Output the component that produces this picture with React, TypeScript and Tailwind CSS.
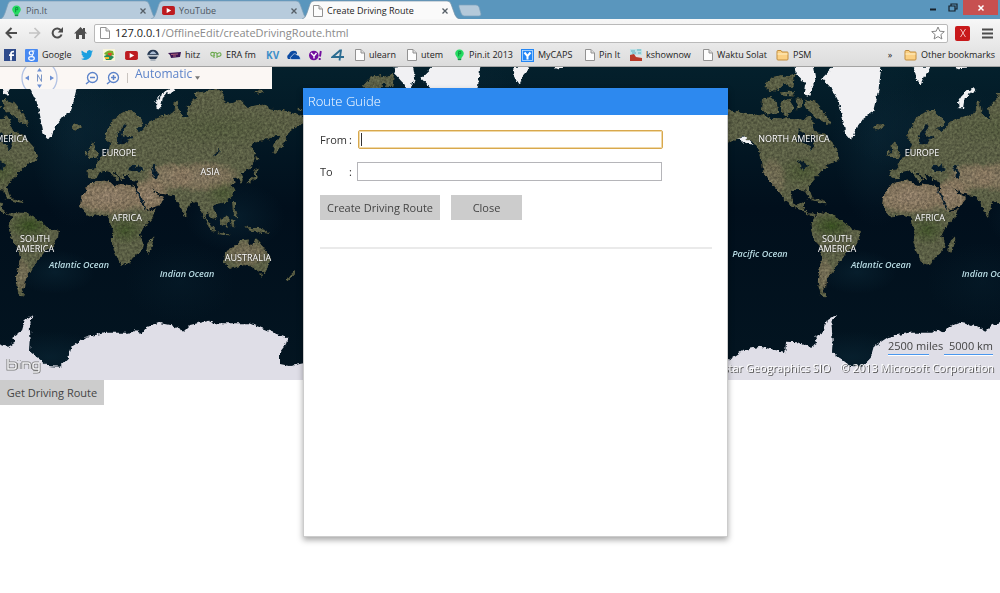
import React from "react";

const font = "font-['Open_Sans','Noto_Sans',sans-serif]";

type Box = { className?: string };

const Page = ({ className = "" }: Box) => (
  <svg viewBox="0 0 10 12" className={`h-3 w-[10px] shrink-0 ${className}`} aria-hidden="true">
    <path d="M.5 .5H6L9.500 4V11.500H.5Z" fill="#fdfdfd" stroke="#929292" />
    <path d="M6 .5V4H9.500" fill="#ddd" stroke="#929292" />
  </svg>
);

const Pin = () => (
  <svg viewBox="0 0 12 14" className="h-3 w-[11px] shrink-0" aria-hidden="true">
    <path d="M6 .5C3 .5 1 2.600 1 5.300C1 8 3.500 9 3.800 11H8.200C8.500 9 11 8 11 5.300C11 2.600 9 .5 6 .5Z" fill="#25dc61" />
    <path d="M4 11H8V13H4Z" fill="#139646" />
    <path d="M5 8.500V3H7.500V5.500H5" fill="none" stroke="#08893b" />
  </svg>
);

const Tube = () => (
  <svg viewBox="0 0 14 12" className="h-[11px] w-[13px] shrink-0" aria-hidden="true">
    <rect y="1" width="14" height="10" rx="2" fill="#bd1b20" />
    <path d="M5 3.300L10 6L5 8.700Z" fill="#fff" />
  </svg>
);

const Folder = () => (
  <svg viewBox="0 0 13 12" className="h-3 w-[13px] shrink-0" aria-hidden="true">
    <path d="M1 10V2.500Q1 1.500 2 1.500H5L6 3H11.500Q12 3 12 4V10Q12 11 11 11H2Q1 11 1 10Z" fill="#fbd083" stroke="#c18d3e" />
    <path d="M1.500 5H11.500" stroke="#fff0c8" />
  </svg>
);

const Facebook = () => (
  <svg viewBox="0 0 12 12" className="h-3 w-3 shrink-0" aria-hidden="true">
    <rect width="12" height="12" fill="#2f4b8b" />
    <path d="M7 11.500V4.500Q7 2.500 10 2.700M5 6.200H10" fill="none" stroke="#fff" strokeWidth="1.800" />
  </svg>
);

const GoogleIcon = () => (
  <svg viewBox="0 0 13 13" className="h-[13px] w-[13px] shrink-0" aria-hidden="true">
    <rect width="13" height="13" rx="1" fill="#4889f1" />
    <circle cx="6.300" cy="4" r="2" fill="none" stroke="#fff" strokeWidth="1.200" />
    <ellipse cx="6.500" cy="9.500" rx="2.800" ry="1.800" fill="none" stroke="#fff" strokeWidth="1.200" />
    <path d="M7 2H9.500M7 6L8 7.500" stroke="#fff" />
  </svg>
);

const Bird = () => (
  <svg viewBox="0 0 24 24" className="h-3 w-3 shrink-0" aria-hidden="true">
    <path d="M24 4.600a10 10 0 0 1-2.800.8 5 5 0 0 0 2.200-2.700 10 10 0 0 1-3.100 1.200 4.900 4.900 0 0 0-8.400 4.500A14 14 0 0 1 1.700 3.200a4.900 4.900 0 0 0 1.500 6.600 4.900 4.900 0 0 1-2.200-.6 4.900 4.900 0 0 0 3.900 4.900 5 5 0 0 1-2.200.1 4.900 4.900 0 0 0 4.600 3.400A9.900 9.900 0 0 1 0 19.500 14 14 0 0 0 21.500 7.100 10 10 0 0 0 24 4.600Z" fill="#1b9fe0" />
  </svg>
);

const Parrot = () => (
  <svg viewBox="0 0 12 12" className="h-3 w-3 shrink-0" aria-hidden="true">
    <rect width="12" height="12" fill="#f8f4dc" />
    <path d="M1 5Q4 0 10 2L11 6L6 7Z" fill="#77ae2b" />
    <path d="M1 7L6 5L11 8L8 11H3Z" fill="#258b58" />
    <path d="M5 4L9 4L8 7L5 6Z" fill="#e14a27" />
    <path d="M2 8H6V10H2Z" fill="#f0bd2b" />
  </svg>
);

const Dome = () => (
  <svg viewBox="0 0 12 12" className="h-3 w-3 shrink-0" aria-hidden="true">
    <path d="M0 6.500Q1 .8 6 .8Q11 .8 12 6.500Z" fill="#263851" />
    <path d="M2.500 5Q6 -.5 9.500 5Z" fill="#a8bad1" />
    <path d="M0 6.500H12" stroke="#c4ccd4" strokeWidth="1.300" />
    <path d="M1 7.500H11L9 10H3Z" fill="#263851" />
    <path d="M3.500 11H8.500" stroke="#7a899c" />
  </svg>
);

const Hitz = () => (
  <svg viewBox="0 0 13 8" className="h-2 w-[13px] shrink-0" aria-hidden="true">
    <path d="M0 2L13 1L12 6L3 7L2 4Z" fill="#3b1453" />
    <path d="M3 3.500L10 3M5 5H8" stroke="#b0627a" />
  </svg>
);

const Era = () => (
  <svg viewBox="0 0 12 8" className="h-2 w-3 shrink-0" aria-hidden="true">
    <path d="M5 2Q0 0 1 4Q2 6 5 4M4 7V3Q6 0 7 3V7M7 3Q11 0 11 4Q10 6 7 5" fill="none" stroke="#6aa84d" strokeWidth="1.100" />
  </svg>
);

const Cloud = () => (
  <svg viewBox="0 0 14 10" className="h-[10px] w-[14px] shrink-0" aria-hidden="true">
    <path d="M1 9Q-1 6 2 4Q4 0 8 1Q10 1 10 4L5 9Z" fill="#0b4aa2" />
    <path d="M4 9.500Q2 7 5 6Q7 2 10 5Q13 5 13.500 9.500Z" fill="#0b4aa2" stroke="#e9eef5" strokeWidth=".6" />
  </svg>
);

const Yahoo = () => (
  <svg viewBox="0 0 13 11" className="h-[11px] w-[13px] shrink-0" aria-hidden="true">
    <circle cx="4.800" cy="5.500" r="4.800" fill="#720e9e" />
    <path d="M2 3L5 6V8.500M5 6L7.500 3" fill="none" stroke="#fff" strokeWidth="1.400" />
    <path d="M11.800 1L11 6.500M10.700 8V10" stroke="#720e9e" strokeWidth="1.900" />
  </svg>
);

const Four = () => (
  <svg viewBox="0 0 14 12" className="h-3 w-[14px] shrink-0" aria-hidden="true">
    <path d="M13 8H1.500L9 1.500H10L8.500 11.500" fill="none" stroke="#2b6c91" strokeWidth="1.800" />
  </svg>
);

const Caps = () => (
  <svg viewBox="0 0 13 13" className="h-[13px] w-[13px] shrink-0" aria-hidden="true">
    <rect width="13" height="13" fill="#2386f5" />
    <rect x="1.500" y="1.500" width="10" height="10" fill="none" stroke="#bfe0ff" strokeWidth=".8" />
    <path d="M3.500 3.500L6.500 7V10.500M9.500 3.500L6.500 7" fill="none" stroke="#fff" strokeWidth="2" />
  </svg>
);

const Show = () => (
  <svg viewBox="0 0 12 12" className="h-3 w-3 shrink-0" aria-hidden="true">
    <path d="M0 0H12V6H0Z" fill="#bde2e7" />
    <path d="M1 2H5M7 1H11M2 4H6M8 4H11" stroke="#5caebb" />
    <path d="M0 6L4 5L6 8L12 9V12H0Z" fill="#b83b29" />
  </svg>
);

const Kv = () => <span className="text-[10px] font-bold text-[#3d8fc9]">KV</span>;

const bookmarks: { name: string; text?: string; width: string; icon: React.ReactNode }[] = [
  { name: "Facebook", width: "w-[21px]", icon: <Facebook /> },
  { name: "Google", text: "Google", width: "w-[56px]", icon: <GoogleIcon /> },
  { name: "Twitter", width: "w-[22px]", icon: <Bird /> },
  { name: "Games", width: "w-[22px]", icon: <Parrot /> },
  { name: "YouTube", width: "w-[22px]", icon: <Tube /> },
  { name: "Portal", width: "w-[21px]", icon: <Dome /> },
  { name: "hitz", text: "hitz", width: "w-[42px]", icon: <Hitz /> },
  { name: "ERA fm", text: "ERA fm", width: "w-[56px]", icon: <Era /> },
  { name: "KV", width: "w-[21px]", icon: <Kv /> },
  { name: "SkyDrive", width: "w-[22px]", icon: <Cloud /> },
  { name: "Yahoo", width: "w-[22px]", icon: <Yahoo /> },
  { name: "4shared", width: "w-[24px]", icon: <Four /> },
  { name: "ulearn", text: "ulearn", width: "w-[52px]", icon: <Page /> },
  { name: "utem", text: "utem", width: "w-[47px]", icon: <Page /> },
  { name: "Pin.it 2013", text: "Pin.it 2013", width: "w-[67px]", icon: <Pin /> },
  { name: "MyCAPS", text: "MyCAPS", width: "w-[64px]", icon: <Caps /> },
  { name: "Pin It", text: "Pin It", width: "w-[45px]", icon: <Page /> },
  { name: "kshownow", text: "kshownow", width: "w-[73px]", icon: <Show /> },
  { name: "Waktu Solat", text: "Waktu Solat", width: "w-[73px]", icon: <Page /> },
  { name: "PSM", text: "PSM", width: "w-[40px]", icon: <Folder /> },
];

function Tab({ icon, title, active = false }: { icon: React.ReactNode; title: string; active?: boolean }) {
  return (
    <div className={`relative -mr-[7px] flex h-[19px] w-[158px] items-center pt-[2px] pl-[11px] pr-[11px] ${active ? "z-10" : ""}`}>
      <svg viewBox="0 0 158 19" preserveAspectRatio="none" className="absolute inset-0 h-full w-full" aria-hidden="true">
        <path
          d="M0 19Q3 19 5 13L8 4Q9 1 12 1H145Q148 1 149 4L153 15Q155 19 158 19"
          fill={active ? "#fafafa" : "#b7cbdc"}
          stroke={active ? "#7893a7" : "#7e9fb8"}
          strokeWidth=".7"
        />
      </svg>
      <div className="relative flex w-full items-center gap-1">
        {icon}
        <a href="#" className={`grow text-[9px] leading-3 ${active ? "text-[#222]" : "text-[#4d5660]"}`}>{title}</a>
        <button aria-label={`Close ${title}`} className="flex h-3 w-2 items-center">
          <svg viewBox="0 0 8 8" className="h-2 w-2"><path d="M1.500 1.500L6.500 6.500M6.500 1.500L1.500 6.500" stroke="#555e66" strokeWidth="1.300" /></svg>
        </button>
      </div>
    </div>
  );
}

function Browser() {
  return (
    <header className="h-[67px] border-b border-[#a3a3a3] bg-[#dfdfdf]">
      <div className="flex h-[19px] bg-[#5a96bd]">
        <div className="flex grow">
          <Tab title="Pin.It" icon={<Pin />} />
          <Tab title="YouTube" icon={<Tube />} />
          <Tab title="Create Driving Route" icon={<Page />} active />
          <button aria-label="New tab" className="ml-[3px] h-[19px] w-7">
            <svg viewBox="0 0 28 19" className="h-full w-full"><path d="M3 5H20Q22 5 23 7L25 14Q25 16 23 16H8Q6 16 5 13L3 7Z" fill="#b4c9da" stroke="#7ba0bc" strokeWidth=".7" /></svg>
          </button>
        </div>
        <div className="flex items-start">
          <button aria-label="Minimize" className="h-4 w-[20px]"><svg viewBox="0 0 20 16" className="h-4 w-5"><path d="M7 9.500H13" stroke="#17212a" strokeWidth="2" /></svg></button>
          <button aria-label="Restore" className="h-4 w-[20px]"><svg viewBox="0 0 20 16" className="h-4 w-5"><path d="M6 6H12V11H6ZM8 6V4H14V9H12" fill="none" stroke="#17212a" strokeWidth="1.200" /></svg></button>
          <button aria-label="Close window" className="mr-[2px] flex h-[15px] w-[35px] items-center justify-center bg-[#c75050]"><svg viewBox="0 0 8 8" className="h-2 w-2"><path d="M1.500 1.500L6.500 6.500M6.500 1.500L1.500 6.500" stroke="#fff" strokeWidth="1.500" /></svg></button>
        </div>
      </div>
      <div className="flex h-[47px] flex-col bg-linear-to-b from-[#f7f7f7] to-[#dcdcdc] pt-1">
        <div className="flex h-5 items-center">
          <div className="flex w-[94px] items-center">
            <button aria-label="Back" className="w-[23px] pl-[5px]"><svg viewBox="0 0 13 12" className="h-3 w-[13px]"><path d="M12 6H2M6.500 1L1.500 6L6.500 11" fill="none" stroke="#4d4d4d" strokeWidth="2" /></svg></button>
            <button aria-label="Forward" className="w-[23px] pl-[5px]"><svg viewBox="0 0 13 12" className="h-3 w-[13px]"><path d="M1 6H11M6.500 1L11.500 6L6.500 11" fill="none" stroke="#c3c3c3" strokeWidth="1.700" /></svg></button>
            <button aria-label="Reload" className="w-[23px] pl-[5px]"><svg viewBox="0 0 13 12" className="h-3 w-[13px]"><path d="M10 3.300A4.600 4.600 0 1 0 10.600 7.500" fill="none" stroke="#4d4d4d" strokeWidth="2" /><path d="M12 0V5.500H6.700Z" fill="#4d4d4d" /></svg></button>
            <button aria-label="Home" className="w-[23px] pl-[5px]"><svg viewBox="0 0 13 12" className="h-3 w-[13px]"><path d="M0 6.500L6.500 0L9 2.500V1H11V4.500L13 6.500H11V12H8V8H5V12H2V6.500Z" fill="#4d4d4d" /></svg></button>
          </div>
          <div className="flex h-[19px] grow items-center rounded-[2px] border border-[#b9b9b9] bg-white pl-[5px] pr-[2px]">
            <Page />
            <div className="grow pl-[5px] text-[11px] leading-4 text-[#8a8a8a]"><span className="text-[#222]">127.0.0.1</span>/OfflineEdit/createDrivingRoute.html</div>
            <button aria-label="Bookmark this page"><svg viewBox="0 0 14 14" className="h-[14px] w-[14px]"><path d="M7 1L8.800 5.200L13.300 5.600L9.900 8.600L10.900 13L7 10.600L3.100 13L4.100 8.600L.7 5.600L5.200 5.200Z" fill="#fff" stroke="#858585" /></svg></button>
          </div>
          <div className="flex w-[52px] items-center gap-[12px] pl-[7px]">
            <button aria-label="Extension" className="flex h-[15px] w-[15px] items-center justify-center rounded-[2px] bg-[#c8191b]"><svg viewBox="0 0 8 8" className="h-2 w-2"><path d="M1.500 0L6.500 8M6.500 0L1.500 8" stroke="#f3c2c2" /></svg></button>
            <button aria-label="Menu"><svg viewBox="0 0 11 11" className="h-[11px] w-[11px]"><path d="M0 1.500H11M0 5.500H11M0 9.500H11" stroke="#4b4b4b" strokeWidth="2" /></svg></button>
          </div>
        </div>
        <nav aria-label="Bookmarks" className="flex h-[23px] items-center pt-px pl-1 text-[9px] leading-3 text-[#222]">
          {bookmarks.map((b) => (
            <a key={b.name} href="#" aria-label={b.name} className={`flex shrink-0 items-center gap-1 whitespace-nowrap ${b.width}`}>
              {b.icon}
              {b.text}
            </a>
          ))}
          <div className="flex grow items-center justify-end gap-[6px] pr-[5px] whitespace-nowrap">
            <button aria-label="More bookmarks" className="pr-[6px]">»</button>
            <a href="#" className="flex items-center gap-1"><Folder />Other bookmarks</a>
          </div>
        </nav>
      </div>
    </header>
  );
}

const LAND = {
  eurasia:
    "M264 340L262 315L290 312L285 298L300 280L325 262L330 235L320 226L314 205L330 180L345 155L375 137L398 138L415 155L432 172L425 185L408 188L418 200L430 190L445 170L470 158L500 150L520 140L523 112L533 106L540 140L550 155L562 160L558 130L572 115L590 95L580 84L620 78L650 72L672 85L668 105L690 115L720 105L740 125L790 118L810 130L850 135L880 142L915 158L925 168L890 185L870 200L860 220L838 255L822 268L816 262L825 235L838 212L820 215L800 225L762 230L752 248L768 265L762 290L745 315L725 325L732 340L728 358L718 350L712 335L695 338L705 352L695 360L705 375L700 395L680 410L665 415L645 420L640 428L656 450L645 462L630 458L622 440L615 462L635 490L625 485L608 455L600 430L585 410L575 412L560 440L560 458L552 450L535 412L520 395L500 390L475 385L456 368L470 388L492 395L480 420L440 435L430 420L415 385L412 348L390 345L382 330L370 330L375 345L362 345L350 328L335 315L355 338L350 348L330 322L315 318L300 322L290 340L275 345Z",
  africa:
    "M270 355L300 348L325 345L345 365L360 355L400 362L415 380L435 425L440 438L468 432L460 455L430 490L420 510L430 535L425 558L405 572L385 597L362 600L345 565L333 530L340 500L328 480L325 455L300 450L265 455L240 425L243 395Z",
  australia:
    "M672 590L675 560L705 542L720 525L747 523L745 540L757 542L765 520L775 528L790 545L812 575L808 600L795 622L775 620L755 605L730 601L690 612Z",
  isles:
    "M262 272L270 258L268 244L278 232L287 240L284 252L296 268L294 278L272 280ZM254 262L262 256L264 268L255 273ZM214 183L225 177L240 178L247 187L232 196L218 192ZM442 530L460 512L461 530L448 565L438 558ZM780 628H790L785 640ZM882 612L888 625L875 640L860 650L854 645L870 634ZM735 482L755 488L778 488L800 498L812 508L790 505L770 500L745 496ZM660 462L685 450L690 465L682 485L665 482ZM612 462L635 478L650 498L640 500ZM650 502L692 508L690 512L650 508ZM696 410L706 412L705 430L714 445L710 458L698 450ZM692 466L705 465L700 472L708 488L695 485ZM738 352L750 340L765 335L762 312L775 308L782 302L772 318L770 340L748 356ZM768 265L776 285L770 292ZM760 82L775 75L798 82L780 88ZM890 128H905V134H892ZM348 340L358 343L356 348H346Z",
  northAmerica:
    "M-45 160L-20 138L5 135L75 150L98 147L130 158L170 160L200 158L230 165L242 150L255 160L262 200L290 205L330 250L338 285L310 298L300 305L280 325L262 345L245 365L258 400L250 402L237 377L198 375L193 395L203 420L225 412L235 414L230 432L245 445L268 445L260 455L240 447L205 428L180 412L160 390L143 368L125 345L108 325L105 290L98 265L80 235L50 215L10 235L-20 225L-50 235L-38 215Z",
  arctic:
    "M105 100L130 96L150 110L155 145L120 152L102 130ZM110 62L135 35L165 30L180 50L160 70L130 82ZM155 82L205 78L200 92L160 90ZM160 110L190 100L200 135L180 155L162 140ZM205 100L225 100L225 125L212 135ZM232 100L265 110L290 140L312 170L306 184L270 158L235 130ZM170 35L205 25L200 65L180 68Z",
  southAmerica:
    "M250 480L270 440L310 445L350 470L370 490L402 497L400 518L385 545L360 560L348 575L330 600L318 622L300 642L298 668L290 672L298 695L282 692L272 655L274 630L285 580L278 545L256 515Z",
  caribbean: "M238 402L265 400L295 410L300 416L270 410Z",
};

const WATER =
  "M352 238L350 218L354 204L366 190L372 178L380 180L374 195L366 206L370 215L390 213L400 218L383 223L376 238ZM390 305L400 299L410 306L418 298L422 306L435 315L420 319L400 318L388 316ZM452 305L462 296L470 300L464 312L474 325L472 342L460 338L462 325ZM640 268L655 258L660 248L658 264L642 272Z";

const ANTARCTICA =
  "M-3 840L25 845L45 833L40 815L65 800L75 765L88 757L106 750L88 770L92 825L90 860L115 880L145 903L180 905L205 880L215 845L235 832L260 815L320 803L390 803L410 795L425 805L440 787L475 773L520 782L550 800L570 780L625 767L640 775L750 775L800 795L862 820L855 845L840 865L840 897L870 903L910 895L960 904L983 885L1028 855L1078 845L1153 862L1155 830L1190 832L1207 840V960H-3Z";

const TILES = [-401, 0, 401, 802, 1203, 1604];

function WorldMap() {
  return (
    <svg className="absolute inset-0 h-full w-full" aria-hidden="true">
      <defs>
        <radialGradient id="tan"><stop offset="0" stopColor="#8c7a66" stopOpacity=".95" /><stop offset=".65" stopColor="#82715b" stopOpacity=".85" /><stop offset="1" stopColor="#82715b" stopOpacity="0" /></radialGradient>
        <radialGradient id="forest"><stop offset="0" stopColor="#34491f" /><stop offset="1" stopColor="#34491f" stopOpacity="0" /></radialGradient>
        <radialGradient id="shelf"><stop offset="0" stopColor="#0a2635" stopOpacity=".6" /><stop offset="1" stopColor="#0a2635" stopOpacity="0" /></radialGradient>
        <linearGradient id="ocean" x2="0" y2="1"><stop offset="0" stopColor="#04202c" /><stop offset=".45" stopColor="#010f1c" /><stop offset="1" stopColor="#031521" /></linearGradient>
        <filter id="rough" filterUnits="userSpaceOnUse" x="-10" y="-10" width="2020" height="330">
          <feTurbulence type="fractalNoise" baseFrequency=".22" numOctaves="3" seed="4" result="edge" />
          <feDisplacementMap in="SourceGraphic" in2="edge" scale="5" xChannelSelector="R" yChannelSelector="G" />
        </filter>
        <filter id="terrain" filterUnits="userSpaceOnUse" x="-10" y="-10" width="2020" height="330" colorInterpolationFilters="sRGB">
          <feTurbulence type="fractalNoise" baseFrequency=".22" numOctaves="3" seed="4" result="edge" />
          <feDisplacementMap in="SourceGraphic" in2="edge" scale="5" xChannelSelector="R" yChannelSelector="G" result="shape" />
          <feTurbulence type="fractalNoise" baseFrequency=".4" numOctaves="3" seed="9" />
          <feColorMatrix values="1 0 0 0 0  1 0 0 0 0  1 0 0 0 0  0 0 0 0 1" result="grain" />
          <feComposite in="shape" in2="grain" operator="arithmetic" k1=".75" k2=".65" result="lit" />
          <feComposite in="lit" in2="shape" operator="in" />
        </filter>
        <clipPath id="coast">
          <path d={LAND.eurasia} />
          <path d={LAND.africa} />
          <path d={LAND.australia} />
          <path d={LAND.northAmerica} transform="translate(-225 0)" />
          <path d={LAND.southAmerica} transform="translate(-225 0)" />
        </clipPath>
        <g id="world">
          <g fill="#585c43">
            <path d={LAND.eurasia} />
            <path d={LAND.africa} />
            <path d={LAND.australia} />
            <path d={LAND.isles} />
            <g transform="translate(-225 0)">
              <path d={LAND.northAmerica} />
              <path d={LAND.arctic} />
              <path d={LAND.southAmerica} />
              <path d={LAND.caribbean} />
            </g>
          </g>
          <g clipPath="url(#coast)">
            <ellipse cx="325" cy="395" rx="135" ry="58" fill="url(#tan)" />
            <ellipse cx="450" cy="390" rx="60" ry="55" fill="url(#tan)" />
            <ellipse cx="510" cy="335" rx="80" ry="45" fill="url(#tan)" opacity=".8" />
            <ellipse cx="610" cy="335" rx="115" ry="50" fill="url(#tan)" opacity=".8" />
            <ellipse cx="740" cy="565" rx="70" ry="42" fill="url(#tan)" opacity=".5" />
            <ellipse cx="-90" cy="340" rx="45" ry="65" fill="url(#tan)" opacity=".45" />
            <ellipse cx="66" cy="630" rx="28" ry="55" fill="url(#tan)" opacity=".5" />
            <ellipse cx="90" cy="482" rx="70" ry="42" fill="url(#forest)" />
            <ellipse cx="375" cy="495" rx="60" ry="45" fill="url(#forest)" opacity=".7" />
            <ellipse cx="670" cy="385" rx="60" ry="45" fill="url(#forest)" opacity=".45" />
            <ellipse cx="0" cy="320" rx="70" ry="50" fill="url(#forest)" opacity=".45" />
            <ellipse cx="650" cy="190" rx="240" ry="60" fill="url(#forest)" opacity=".2" />
          </g>
          <path d={WATER} fill="#061b2a" />
          <path d="M412 374L438 428L434 433L408 378Z" fill="#061b2a" />
          <path d="M-10 192L8 205L12 218L32 205L38 222L34 240L28 258L20 240L-12 228ZM-14 292L0 286L12 295L22 302L8 308L4 318L-4 306Z" fill="#071b27" />
        </g>
        <g id="ice" fill="#f1f1f3">
          <path d="M60 40L95 5V-20H238V5L230 70L213 140L185 160L165 185L155 215L145 222L130 205L120 150L110 110L93 75Z" />
          <path d="M470 130L468 112L482 90L500 76L518 70L523 78L500 86L488 100L483 130Z" />
          <path d="M-22 5L35 0L42 38L22 92L8 88L12 60L-18 28ZM335 5L385 5L378 20L365 35L355 60L345 45ZM450 2H492V8L470 10Z" />
          <path d="M-195 222L-170 216L-145 240L-160 236L-180 230Z" />
          <path d={ANTARCTICA} fill="#dfdee7" />
        </g>
      </defs>
      <rect width="100%" height="100%" fill="url(#ocean)" />
      {TILES.map((x) => (
        <g key={x} transform={`translate(${x} 0)`}>
          <ellipse cx="75" cy="70" rx="45" ry="90" fill="url(#shelf)" />
          <ellipse cx="130" cy="62" rx="90" ry="45" fill="url(#shelf)" />
          <ellipse cx="55" cy="205" rx="40" ry="22" fill="url(#shelf)" />
          <ellipse cx="180" cy="215" rx="55" ry="40" fill="url(#shelf)" opacity=".5" />
          <ellipse cx="235" cy="150" rx="50" ry="35" fill="url(#shelf)" />
          <ellipse cx="50" cy="290" rx="60" ry="26" fill="url(#shelf)" />
        </g>
      ))}
      <g filter="url(#terrain)">
        {TILES.map((x) => (
          <use key={x} href="#world" transform={`translate(${x} -2) scale(.33333)`} />
        ))}
      </g>
      <g filter="url(#rough)">
        {TILES.map((x) => (
          <use key={x} href="#ice" transform={`translate(${x} -2) scale(.33333)`} />
        ))}
      </g>
    </svg>
  );
}

const land = "absolute -translate-x-1/2 text-center text-[9px] leading-[10px] text-white [text-shadow:0_0_2px_#222] whitespace-nowrap";
const sea = "absolute -translate-x-1/2 text-[9px] leading-[10px] font-semibold italic text-[#b9dce4] whitespace-nowrap";

function MapLabels() {
  return (
    <>
      <span className={`${land} left-[-8px] top-[67px]`}>NORTH AMERICA</span>
      <span className={`${land} left-[119px] top-[81px]`}>EUROPE</span>
      <span className={`${land} left-[210px] top-[100px]`}>ASIA</span>
      <span className={`${land} left-[127px] top-[146px]`}>AFRICA</span>
      <span className={`${land} left-[35px] top-[167px]`}>SOUTH<br />AMERICA</span>
      <span className={`${land} left-[248px] top-[186px]`}>AUSTRALIA</span>
      <span className={`${sea} left-[79px] top-[193px]`}>Atlantic Ocean</span>
      <span className={`${sea} left-[187px] top-[202px]`}>Indian Ocean</span>
      <span className={`${land} left-[794px] top-[67px]`}>NORTH AMERICA</span>
      <span className={`${land} left-[922px] top-[81px]`}>EUROPE</span>
      <span className={`${land} left-[930px] top-[146px]`}>AFRICA</span>
      <span className={`${land} left-[837px] top-[167px]`}>SOUTH<br />AMERICA</span>
      <span className={`${sea} left-[760px] top-[182px]`}>Pacific Ocean</span>
      <span className={`${sea} left-[881px] top-[193px]`}>Atlantic Ocean</span>
      <span className={`${sea} left-[989px] top-[202px]`}>Indian Ocean</span>
    </>
  );
}

function MapToolbar() {
  return (
    <div className="relative flex h-[22px] w-[272px] overflow-hidden bg-[#fbf7f4] text-[#5c83c9]">
      <button aria-label="Rotate map" className="ml-[21px] h-[22px] w-[37px]">
        <svg viewBox="0 0 37 22" className="h-[22px] w-[37px]">
          <circle cx="18.500" cy="11" r="17.500" fill="none" stroke="#b3c3e4" strokeWidth="1.300" />
          <path d="M18.500 1L21 4.500H16ZM18.500 21L21 17.500H16ZM4 11L8 8.500V13.500ZM33 11L29 8.500V13.500Z" fill="#6d90d2" />
          <path d="M16.500 14.500V7.500L20.500 14.500V7.500" fill="none" stroke="#7c96c6" />
        </svg>
      </button>
      <button aria-label="Zoom out" className="ml-[27px] h-[22px] w-[14px]"><svg viewBox="0 0 14 14" className="h-[14px] w-[14px]"><circle cx="7.500" cy="6.500" r="5" fill="none" stroke="currentColor" strokeWidth="1.300" /><path d="M5 6.500H10M4 10.500L1 13" stroke="currentColor" strokeWidth="1.500" /></svg></button>
      <button aria-label="Zoom in" className="ml-[7px] h-[22px] w-[14px]"><svg viewBox="0 0 14 14" className="h-[14px] w-[14px]"><circle cx="7.500" cy="6.500" r="5" fill="none" stroke="currentColor" strokeWidth="1.300" /><path d="M5 6.500H10M7.500 4V9M4 10.500L1 13" stroke="currentColor" strokeWidth="1.500" /></svg></button>
      <div className="mt-[6px] ml-[7px] h-[10px] w-px bg-[#c9c4c0]" />
      <button className="ml-[7px] flex h-[14px] items-center gap-[3px] text-[12px] leading-[14px]">Automatic<svg viewBox="0 0 6 4" className="mt-2 h-1 w-[5px]"><path d="M0 0H6L3 4Z" fill="#777" /></svg></button>
    </div>
  );
}

function RouteDialog() {
  return (
    <section role="dialog" aria-labelledby="dialog-title" className="h-[449px] w-[425px] border border-[#ccc] bg-white shadow-[0_3px_6px_rgba(0,0,0,0.35)]">
      <h1 id="dialog-title" className="-mx-px -mt-px flex h-[27px] items-center bg-[#2d89ef] px-[5px] pb-[2px] text-[13px] leading-5 font-light text-white">Route Guide</h1>
      <form className="pt-[15px] pr-[15px] pl-4 text-[11px] leading-4 text-[#333]" onSubmit={(e) => e.preventDefault()}>
        <div className="flex h-[19px] items-center">
          <label htmlFor="from" className="flex w-8 justify-between">From<span>:</span></label>
          <div className="relative ml-[6px] flex h-[19px] w-[305px]">
            <input id="from" className="w-full rounded-[2px] border border-[#d8a84d] bg-white px-[2px] ring-1 ring-[#f0d9a8] outline-none ring-inset" />
            <span className="absolute top-[3px] left-[3px] h-[13px] w-px bg-[#333]" />
          </div>
        </div>
        <div className="mt-[13px] flex h-[19px] items-center">
          <label htmlFor="to" className="flex w-8 justify-between">To<span>:</span></label>
          <input id="to" className="ml-[5px] h-[19px] w-[305px] border border-[#b5b5b9] bg-white px-[2px] outline-none" />
        </div>
        <div className="mt-[14px] flex gap-[11px]">
          <button type="submit" className="h-[25px] w-[120px] bg-[#ccc] text-[#444]">Create Driving Route</button>
          <button type="button" className="h-[25px] w-[71px] bg-[#ccc] text-[#444]">Close</button>
        </div>
        <hr className="mt-[27px] border-t-2 border-[#eaeaea]" />
      </form>
    </section>
  );
}

export default function App() {
  return (
    <div className={`relative min-h-screen overflow-hidden bg-white ${font}`}>
      <Browser />
      <main className="relative">
        <div className="relative h-[313px] overflow-hidden bg-[#02111f]">
          <WorldMap />
          <MapLabels />
          <MapToolbar />
          <div className="absolute bottom-[6px] left-[6px]">
            <svg viewBox="0 0 36 16" className="h-4 w-9" aria-label="Bing">
              <path d="M2 1V11H8Q10 11 10 9V7Q10 5 8 5H3M13 5V11M13 2V3M17 11V5H22Q24 5 24 7V11M33 5H29Q27 5 27 7V9Q27 11 29 11H33V5V13Q33 14 31 14H27" fill="none" stroke="#777" strokeWidth="3" />
              <path d="M2 1V11H8Q10 11 10 9V7Q10 5 8 5H3M13 5V11M13 2V3M17 11V5H22Q24 5 24 7V11M33 5H29Q27 5 27 7V9Q27 11 29 11H33V5V13Q33 14 31 14H27" fill="none" stroke="#f5f5f7" strokeWidth="1.500" />
            </svg>
          </div>
          <div className="absolute right-[7px] bottom-[24px] flex gap-[1px] text-[11px] leading-4 text-[#444]">
            <div className="w-[55px] whitespace-nowrap">2500 miles<div className="h-[2px] w-[41px] border-b border-white bg-[#4a97ee]" /></div>
            <div className="w-[49px] whitespace-nowrap text-right">5000 km<div className="h-[2px] w-full border-b border-white bg-[#4a97ee]" /></div>
          </div>
          <div className="absolute right-[6px] bottom-1 flex gap-[10px] text-[11px] leading-4 whitespace-nowrap text-white [text-shadow:1px_1px_0_#555]">
            <span>Earthstar Geographics SIO</span>
            <span>© 2013 Microsoft Corporation</span>
          </div>
        </div>
        <button className="block h-[25px] w-[104px] bg-[#ccc] text-[11px] leading-4 text-[#444]">Get Driving Route</button>
        <div className="absolute inset-x-0 top-[21px] flex justify-center pl-[31px]">
          <RouteDialog />
        </div>
      </main>
    </div>
  );
}
